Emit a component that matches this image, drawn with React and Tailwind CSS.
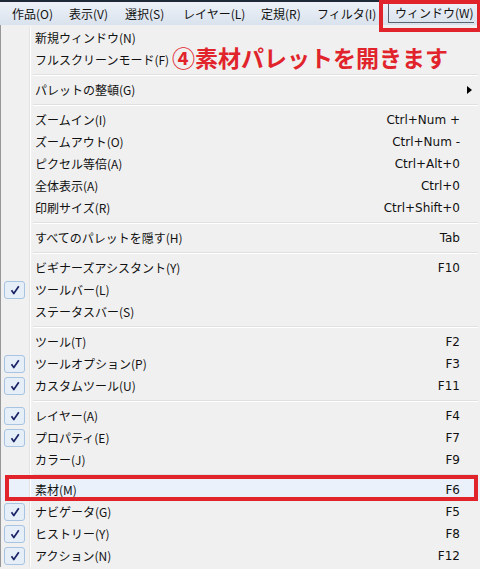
import React from "react";

const jp = { fontFamily: '"Noto Sans CJK JP", "Noto Sans", sans-serif' };
const latin = { fontFamily: '"DejaVu Sans", "Noto Sans CJK JP", sans-serif' };

const menus = [
  { label: "作品(O)", w: "w-[57px]" },
  { label: "表示(V)", w: "w-[56px]" },
  { label: "選択(S)", w: "w-[58px]" },
  { label: "レイヤー(L)", w: "w-[78px]" },
  { label: "定規(R)", w: "w-[56px]" },
  { label: "フィルタ(I)", w: "w-[71px]" },
];

const items = [
  { label: "新規ウィンドウ(N)" },
  { label: "フルスクリーンモード(F)" },
  "sep",
  { label: "パレットの整頓(G)", sub: true },
  "sep",
  { label: "ズームイン(I)", key: "Ctrl+Num +" },
  { label: "ズームアウト(O)", key: "Ctrl+Num -" },
  { label: "ピクセル等倍(A)", key: "Ctrl+Alt+0" },
  { label: "全体表示(A)", key: "Ctrl+0" },
  { label: "印刷サイズ(R)", key: "Ctrl+Shift+0" },
  "sep",
  { label: "すべてのパレットを隠す(H)", key: "Tab" },
  "sep",
  { label: "ビギナーズアシスタント(Y)", key: "F10" },
  { label: "ツールバー(L)", checked: true },
  { label: "ステータスバー(S)" },
  "sep",
  { label: "ツール(T)", key: "F2" },
  { label: "ツールオプション(P)", key: "F3", checked: true },
  { label: "カスタムツール(U)", key: "F11", checked: true },
  "sep",
  { label: "レイヤー(A)", key: "F4", checked: true },
  { label: "プロパティ(E)", key: "F7", checked: true },
  { label: "カラー(J)", key: "F9" },
  "sep",
  { label: "素材(M)", key: "F6", active: true },
  { label: "ナビゲータ(G)", key: "F5", checked: true },
  { label: "ヒストリー(Y)", key: "F8", checked: true },
  { label: "アクション(N)", key: "F12", checked: true },
];

const Check = () => (
  <div className="ml-[3px] mt-[2px] w-[21px] h-[18px] rounded-[3px] border border-[#a9c3e2] bg-[#e6eef8] flex items-center justify-center">
    <svg width="10" height="10" viewBox="0 0 10 10">
      <path d="M1.5 5.2 L3.8 8.5 L8.8 1.2" fill="none" stroke="#1b2466" strokeWidth="1.7" strokeLinejoin="round" />
    </svg>
  </div>
);

const Gutter = ({ children }) => (
  <div className="flex shrink-0 h-full">
    <div className="w-[28px] h-full">{children}</div>
    <div className="w-px h-full bg-[#e2e3e3]" />
    <div className="w-px h-full bg-white" />
  </div>
);

export default function App() {
  return (
    <div className="relative w-[480px] h-[569px] overflow-hidden bg-[#f0f0f0]" style={jp}>
      {/* menu bar */}
      <div className="h-[25px] border-t-2 border-[#1f2a38] bg-gradient-to-b from-[#eef2f8] to-[#d9e2ed] flex items-center pl-[12px] text-[12px] text-[#111]">
        {menus.map((m) => (
          <div key={m.label} className={`${m.w} shrink-0 whitespace-nowrap`}>
            {m.label}
          </div>
        ))}
        <div className="h-[19px] border-l border-b border-[#5a6470] pl-[6px] flex items-center whitespace-nowrap">
          ウィンドウ(W)
        </div>
      </div>

      {/* dropdown */}
      <div className="border-l border-[#979797] pt-[2px] text-[12px] text-[#111]">
        {items.map((it, i) =>
          it === "sep" ? (
            <div key={i} className="flex h-[8px]">
              <Gutter />
              <div className="flex-1 flex flex-col justify-center pl-[2px] pr-[2px]">
                <div className="h-px bg-[#e0e0e0]" />
                <div className="h-px bg-white" />
              </div>
            </div>
          ) : (
            <div key={i} className={`flex h-[22px] ${it.active ? "bg-[#eaf1fa]" : ""}`}>
              <Gutter>{it.checked && <Check />}</Gutter>
              <div className="flex-1 flex items-center pl-[4px] pr-[20px]">
                <span className="whitespace-nowrap">{it.label}</span>
                <span className="ml-auto whitespace-nowrap" style={latin}>
                  {it.key}
                </span>
                {it.sub && (
                  <svg width="5" height="8" viewBox="0 0 5 8" className="mr-[-12px]">
                    <path d="M0 0 L5 4 L0 8 Z" fill="#000" />
                  </svg>
                )}
              </div>
            </div>
          )
        )}
      </div>

      {/* annotations */}
      <div className="absolute left-[379px] top-0 w-[102px] h-[32px] border-4 border-[#e1242b]" />
      <div className="absolute left-[5px] top-[475px] w-[473px] h-[26px] border-4 border-[#e1242b]" />
      <div className="absolute left-[172px] top-[46px] text-[23px] font-bold leading-none text-[#e1242b] whitespace-nowrap">
        ④素材パレットを開きます
      </div>
    </div>
  );
}
